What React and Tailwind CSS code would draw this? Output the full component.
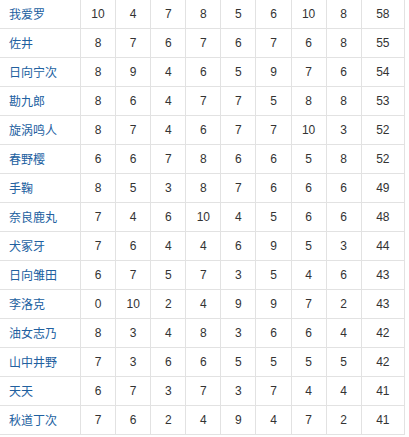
import React from "react";

const rows = [
  ["我爱罗", 10, 4, 7, 8, 5, 6, 10, 8, 58],
  ["佐井", 8, 7, 6, 7, 6, 7, 6, 8, 55],
  ["日向宁次", 8, 9, 4, 6, 5, 9, 7, 6, 54],
  ["勘九郎", 8, 6, 4, 7, 7, 5, 8, 8, 53],
  ["旋涡鸣人", 8, 7, 4, 6, 7, 7, 10, 3, 52],
  ["春野樱", 6, 6, 7, 8, 6, 6, 5, 8, 52],
  ["手鞠", 8, 5, 3, 8, 7, 6, 6, 6, 49],
  ["奈良鹿丸", 7, 4, 6, 10, 4, 5, 6, 6, 48],
  ["犬冢牙", 7, 6, 4, 4, 6, 9, 5, 3, 44],
  ["日向雏田", 6, 7, 5, 7, 3, 5, 4, 6, 43],
  ["李洛克", 0, 10, 2, 4, 9, 9, 7, 2, 43],
  ["油女志乃", 8, 3, 4, 8, 3, 6, 6, 4, 42],
  ["山中井野", 7, 3, 6, 6, 5, 5, 5, 5, 42],
  ["天天", 6, 7, 3, 7, 3, 7, 4, 4, 41],
  ["秋道丁次", 7, 6, 2, 4, 9, 4, 7, 2, 41],
];

const App = () => {
  return (
    <div className="w-[409px] h-[437px] bg-white overflow-hidden">
      <div className="w-[405px]">
        {rows.map((row) => (
          <div
            key={row[0]}
            className="grid grid-cols-[81px_repeat(8,35.1px)_43.2px] h-[29px] border-b border-[#e2e2e2]"
          >
            <div className="flex items-center pl-[9px] border-r border-[#e2e2e2] text-[12px] text-[#21609f] font-['Noto_Sans_CJK_SC',sans-serif]">
              {row[0]}
            </div>
            {row.slice(1).map((n, i) => (
              <div
                key={i}
                className="flex items-center justify-center border-r border-[#e2e2e2] text-[12px] text-[#333] font-['Liberation_Sans',Arial,sans-serif]"
              >
                {n}
              </div>
            ))}
          </div>
        ))}
      </div>
    </div>
  );
};

export default App;
